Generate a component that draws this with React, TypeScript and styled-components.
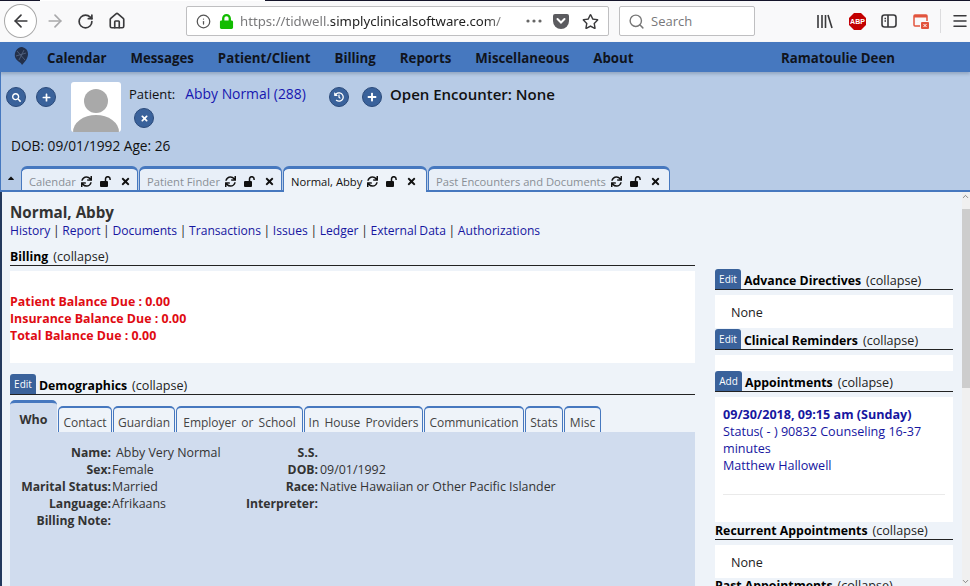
import React from 'react';
import styled, { createGlobalStyle } from 'styled-components';
import { FaSync, FaTimes, FaSearch, FaPlus, FaHistory, FaLock, FaRegStar, FaCaretUp } from 'react-icons/fa';
import { ArrowLeft, ArrowRight, RotateCw, Home, Info, Search, Menu, ChevronUp, ChevronDown } from 'lucide-react';

const GlobalStyle = createGlobalStyle`
  html, body { margin: 0; padding: 0; background: #eef3f9; overflow: hidden; }
  * { box-sizing: border-box; }
  body { font-family: 'Open Sans', 'Noto Sans', sans-serif; font-size: 12px; color: #222; }
`;

const Page = styled.div`
  width: 970px;
  height: 586px;
  overflow: hidden;
  display: flex;
  flex-direction: column;
`;

/* browser chrome */
const Toolbar = styled.div`
  height: 42px;
  flex: none;
  background-color: #f9f9fa;
  background-image: linear-gradient(to right, #14142a 40px, #fff 40px, #fff 265px, #14142a 265px);
  background-size: 100% 1px;
  background-repeat: no-repeat;
  display: flex;
  align-items: center;
  color: #3a3a3c;
`;
const BackButton = styled.div`
  width: 34px;
  height: 34px;
  margin-left: 4px;
  border: 1px solid #a8a8a8;
  border-radius: 50%;
  background: #fff;
  display: flex;
  align-items: center;
  justify-content: center;
`;
const ToolIcon = styled.div<{ $w: number; $faded?: boolean }>`
  width: ${p => p.$w}px;
  flex: none;
  display: flex;
  align-items: center;
  justify-content: center;
  color: ${p => (p.$faded ? '#a9a9ab' : '#3a3a3c')};
`;
const UrlBar = styled.div`
  width: 423px;
  height: 30px;
  margin-left: 49px;
  flex: none;
  background: #fff;
  border: 1px solid #bfbfc1;
  border-radius: 2px;
  display: flex;
  align-items: center;
  padding-left: 9px;
  font-size: 13.2px;
  font-family: 'Noto Sans', sans-serif;
  color: #1b1b1b;
`;
const UrlText = styled.div`
  width: 278px;
  margin-left: 6px;
  white-space: nowrap;
  color: #222;
  -webkit-mask-image: linear-gradient(to right, #000 88%, transparent);
  mask-image: linear-gradient(to right, #000 88%, transparent);
  span { color: #7a7a7c; }
`;
const SearchBox = styled.div`
  width: 136px;
  height: 30px;
  margin-left: 10px;
  flex: none;
  background: #fff;
  border: 1px solid #bfbfc1;
  border-radius: 2px;
  display: flex;
  align-items: center;
  padding-left: 8px;
  gap: 6px;
  font-size: 13px;
  color: #77777a;
`;

/* application nav */
const NavBar = styled.div`
  height: 30px;
  flex: none;
  padding-top: 2px;
  background: #4678bf;
  display: flex;
  align-items: center;
  font-size: 13.25px;
  font-weight: 700;
  color: #10141d;
  box-shadow: 0 2px 3px rgba(60, 80, 110, 0.3);
  position: relative;
`;
const Logo = styled.svg`
  margin: -5px 18px 0 13px;
  flex: none;
`;
const NavLinks = styled.div`
  display: flex;
  gap: 24px;
  width: 734px;
`;

/* patient header */
const PatientBar = styled.div`
  flex: none;
  height: 120px;
  background: #b7cbe6;
  border-left: 1px solid #4678bf;
  display: flex;
  flex-direction: column;
`;
const PatientTop = styled.div`
  display: flex;
  height: 55px;
  margin-top: 10px;
  padding-left: 5px;
`;
const RoundButton = styled.div<{ $size?: number }>`
  width: ${p => p.$size ?? 20}px;
  height: ${p => p.$size ?? 20}px;
  border-radius: 50%;
  background: #3a629b;
  border: 1px solid #2b4a7a;
  color: #fff;
  flex: none;
  display: flex;
  align-items: center;
  justify-content: center;
`;
const SearchGroup = styled.div`
  display: flex;
  gap: 10px;
  margin-top: 5px;
  width: 65px;
`;
const Avatar = styled.svg`
  width: 50px;
  height: 50px;
  flex: none;
  border-radius: 3px;
  background: #fff;
  overflow: hidden;
`;
const PatientInfo = styled.div`
  width: 200px;
  margin-left: 8px;
  display: flex;
  flex-direction: column;
`;
const PatientLine = styled.div`
  font-size: 13px;
  line-height: 18px;
  height: 26px;
  padding-top: 3px;
  color: #111;
  display: flex;
  gap: 10px;
  white-space: nowrap;
  a { color: #1616b0; font-size: 13.9px; }
`;
const ClearSlot = styled.div`
  margin-left: 5px;
`;
const EncounterGroup = styled.div`
  display: flex;
  gap: 13px;
  margin-top: 5px;
`;
const EncounterTitle = styled.div`
  font-size: 15px;
  font-weight: 600;
  color: #111;
  margin: -3px 0 0 -5px;
  line-height: 20px;
  white-space: nowrap;
`;
const DobLine = styled.div`
  font-size: 13.7px;
  line-height: 18px;
  height: 23px;
  margin-left: 10px;
  color: #111;
`;

const TabRow = styled.div`
  height: 26px;
  flex: none;
  display: flex;
  align-items: flex-end;
  border-bottom: 2px solid #4678bf;
  margin-top: auto;
`;
const Caret = styled.div`
  width: 20px;
  height: 24px;
  display: flex;
  align-items: center;
  justify-content: flex-start;
  color: #111;
  padding-left: 5px;
`;
const Tab = styled.div<{ $w: number; $active?: boolean; $gap?: number }>`
  width: ${p => p.$w}px;
  margin-left: ${p => p.$gap ?? 1}px;
  height: ${p => (p.$active ? 26 : 24)}px;
  margin-bottom: ${p => (p.$active ? -2 : 0)}px;
  background: ${p => (p.$active ? '#eef3f9' : '#e8eff8')};
  border-style: solid;
  border-color: #4678bf;
  border-width: 3px 1px 0;
  border-radius: 6px 6px 0 0;
  display: flex;
  align-items: center;
  padding: ${p => (p.$active ? 1 : 3)}px 0 0 7px;
  gap: 8px;
  font-size: 11.2px;
  white-space: nowrap;
  color: ${p => (p.$active ? '#111' : '#8a8f96')};
  svg { color: #111; flex: none; }
`;
const TabLabel = styled.span`
  margin-right: -3px;
`;

/* main content */
const Body = styled.div`
  flex: 1;
  min-height: 0;
  display: flex;
  background: #eef3f9;
  border-left: 2px solid #23395d;
  position: relative;
`;
const LeftColumn = styled.div`
  width: 685px;
  margin-left: 8px;
  flex: none;
  overflow: hidden;
`;
const RightColumn = styled.div`
  width: 238px;
  margin-left: 20px;
  padding-top: 77px;
  flex: none;
  overflow: hidden;
`;
const Scrollbar = styled.div`
  width: 8px;
  margin-left: 9px;
  flex: none;
  background: #f0f0f0;
  display: flex;
  flex-direction: column;
  color: #666;
`;
const ScrollThumb = styled.div`
  margin-top: 8px;
  height: 179px;
  background: #cdcdcd;
`;
const ScrollArrow = styled.div<{ $bottom?: boolean }>`
  height: 9px;
  margin-left: -1px;
  margin-top: ${p => (p.$bottom ? 'auto' : '0')};
  display: flex;
  align-items: center;
  justify-content: center;
`;
const PatientName = styled.h1`
  margin: 11px 0 0;
  font-size: 15.2px;
  line-height: 18px;
  font-weight: 700;
  color: #333;
`;
const LinkRow = styled.div`
  font-size: 12.1px;
  line-height: 18px;
  margin-top: 1px;
  word-spacing: -0.5px;
  color: #222;
  a { color: #1616a0; }
`;
const SectionHead = styled.div<{ $top?: number }>`
  display: flex;
  align-items: flex-end;
  gap: 3px;
  margin-top: ${p => p.$top ?? 0}px;
  border-bottom: 1px solid #222;
  font-size: 12.6px;
  line-height: 16px;
  color: #222;
  white-space: nowrap;
  b { color: #000; font-size: 12.3px; font-weight: 700; margin-right: 2px; }
`;
const EditButton = styled.div<{ $w?: number }>`
  width: ${p => p.$w ?? 26}px;
  height: 20px;
  background: #3a629b;
  border-radius: 3px 3px 0 0;
  color: #fff;
  font-size: 10px;
  display: flex;
  align-items: center;
  justify-content: center;
`;
const WhiteBox = styled.div<{ $h: number; $pad?: string }>`
  background: #fff;
  margin-top: 5px;
  height: ${p => p.$h}px;
  padding: ${p => p.$pad ?? '0'};
  overflow: hidden;
`;
const DueLine = styled.div`
  color: #e00b12;
  font-weight: 700;
  font-size: 12.4px;
  line-height: 17px;
`;
const DemoTabs = styled.div`
  display: flex;
  align-items: flex-end;
  margin-top: 5px;
  gap: 1px;
  height: 32px;
`;
const DemoTab = styled.div<{ $w: number; $active?: boolean }>`
  width: ${p => p.$w}px;
  height: ${p => (p.$active ? 32 : 26)}px;
  padding-top: ${p => (p.$active ? 4 : 5)}px;
  background: ${p => (p.$active ? '#d0dcee' : '#eef3f9')};
  border: 1px solid #4678bf;
  border-top-width: 2px;
  border-bottom: none;
  border-radius: 5px 5px 0 0;
  ${p => p.$active && 'border-width: 3px 0 0 0;'}
  font-size: ${p => (p.$active ? 12.5 : 12)}px;
  font-weight: ${p => (p.$active ? 700 : 400)};
  word-spacing: 2px;
  color: ${p => (p.$active ? '#333' : '#444')};
  display: flex;
  align-items: center;
  justify-content: center;
  white-space: nowrap;
`;
const DemoPanel = styled.div`
  background: #d0dcee;
  height: 200px;
  padding-top: 12px;
`;
const DemoGrid = styled.div`
  display: grid;
  grid-template-columns: 101px 135px 72px 1fr;
  grid-auto-rows: 17px;
  font-size: 12.4px;
  line-height: 17px;
  color: #333;
  white-space: nowrap;
`;
const DemoLabel = styled.div`
  font-weight: 700;
  font-size: 12.2px;
  text-align: right;
`;
const DemoValue = styled.div<{ $indent?: number }>`
  padding-left: ${p => p.$indent ?? 0}px;
`;
const NoneText = styled.div`
  font-size: 12.6px;
  line-height: 17px;
  color: #222;
`;
const AppointmentHead = styled.div`
  font-weight: 700;
  color: #1616a0;
  font-size: 12.6px;
  line-height: 17px;
`;
const AppointmentLine = styled.div`
  color: #1616a0;
  font-size: 12.6px;
  line-height: 17px;
`;
const AppointmentRule = styled.div`
  height: 1px;
  background: #eaeaea;
  margin-top: 20px;
`;

const UnlockIcon = () => (
  <svg width="12" height="11" viewBox="0 0 12 11">
    <rect x="0" y="5" width="8" height="6" rx="1" fill="currentColor" />
    <path d="M5.5 5V3a2.3 2.3 0 0 1 4.6 0v1" fill="none" stroke="currentColor" strokeWidth="1.5" />
  </svg>
);

const tabIcons = (
  <>
    <FaSync size={11} />
    <UnlockIcon />
    <FaTimes size={11} />
  </>
);

const links = ['History', 'Report', 'Documents', 'Transactions', 'Issues', 'Ledger', 'External Data', 'Authorizations'];

const demoRows: [string, string, string, string][] = [
  ['Name:', 'Abby Very Normal', 'S.S.', ''],
  ['Sex:', 'Female', 'DOB:', '09/01/1992'],
  ['Marital Status:', 'Married', 'Race:', 'Native Hawaiian or Other Pacific Islander'],
  ['Language:', 'Afrikaans', 'Interpreter:', ''],
  ['Billing Note:', '', '', ''],
];

const demoTabs: [string, number][] = [
  ['Contact', 54],
  ['Guardian', 62],
  ['Employer or School', 127],
  ['In House Providers', 119],
  ['Communication', 100],
  ['Stats', 38],
  ['Misc', 37],
];

const Head: React.FC<{ title: string; button?: string; top?: number }> = ({ title, button, top }) => (
  <SectionHead $top={top}>
    {button && <EditButton $w={button === 'Add' ? 27 : 26}>{button}</EditButton>}
    <b>{title}</b> (collapse)
  </SectionHead>
);

export default function App() {
  return (
    <Page>
      <GlobalStyle />
      <Toolbar>
        <BackButton>
          <ArrowLeft size={20} strokeWidth={2} />
        </BackButton>
        <ToolIcon $w={36} $faded>
          <ArrowRight size={20} strokeWidth={2} />
        </ToolIcon>
        <ToolIcon $w={24}>
          <RotateCw size={17} strokeWidth={2.4} />
        </ToolIcon>
        <ToolIcon $w={40}>
          <Home size={18} strokeWidth={2.2} />
        </ToolIcon>
        <UrlBar>
          <Info size={15} color="#555" />
          <FaLock size={15} color="#12bc00" style={{ marginLeft: 8 }} />
          <UrlText>
            <span>https://tidwell.</span>simplyclinicalsoftware.com/
          </UrlText>
          <ToolIcon $w={24} style={{ marginLeft: 4 }}>
            <svg width="16" height="4" viewBox="0 0 16 4"><circle cx="2" cy="2" r="1.6" fill="#666" /><circle cx="8" cy="2" r="1.6" fill="#666" /><circle cx="14" cy="2" r="1.6" fill="#666" /></svg>
          </ToolIcon>
          <ToolIcon $w={30}>
            <svg width="16" height="15" viewBox="0 0 16 15"><path d="M2 0h12a2 2 0 0 1 2 2v5a8 8 0 0 1-16 0V2a2 2 0 0 1 2-2z" fill="#5b5b5f" /><path d="M4.5 5l3.5 3.5L11.5 5" stroke="#fff" strokeWidth="2" fill="none" strokeLinecap="round" /></svg>
          </ToolIcon>
          <ToolIcon $w={28}>
            <FaRegStar size={17} />
          </ToolIcon>
        </UrlBar>
        <SearchBox>
          <Search size={17} color="#777" />
          Search
        </SearchBox>
        <ToolIcon $w={32} style={{ marginLeft: 54 }}>
          <svg width="16" height="15" viewBox="0 0 16 15" fill="none" stroke="#3a3a3c" strokeWidth="1.6"><path d="M1 1v13M5 1v13M8.5 1v13M11 1l4 13" /></svg>
        </ToolIcon>
        <ToolIcon $w={32}>
          <svg width="17" height="17" viewBox="0 0 17 17"><polygon points="5,0 12,0 17,5 17,12 12,17 5,17 0,12 0,5" fill="#c30000" /><text x="8.5" y="11" fontSize="7" fontWeight="700" fill="#fff" textAnchor="middle" fontFamily="Liberation Sans">ABP</text></svg>
        </ToolIcon>
        <ToolIcon $w={32}>
          <svg width="16" height="14" viewBox="0 0 16 14" fill="none" stroke="#3a3a3c" strokeWidth="1.6"><rect x="1" y="1" width="14" height="12" rx="2.5" /><path d="M7 1v12M3.5 4.5h1.5M3.5 7h1.5" /></svg>
        </ToolIcon>
        <ToolIcon $w={32}>
          <svg width="16" height="15" viewBox="0 0 16 15" fill="none"><path d="M7 12H2a1 1 0 0 1-1-1V2a1 1 0 0 1 1-1h11a1 1 0 0 1 1 1v5" stroke="#e2543d" strokeWidth="1.5" /><rect x="1" y="1" width="13" height="2.5" fill="#e2543d" /><rect x="8" y="8" width="8" height="7" rx="1" fill="#e2543d" /><path d="M10.5 10l3 3M13.5 10l-3 3" stroke="#fff" /></svg>
        </ToolIcon>
        <ToolIcon $w={30} style={{ borderLeft: '1px solid #dcdcde', height: 24, marginLeft: 3 }}>
          <Menu size={18} strokeWidth={2} style={{ marginLeft: 8 }} />
        </ToolIcon>
      </Toolbar>

      <NavBar>
        <Logo width="16" height="18" viewBox="0 0 16 18">
          <path d="M8 0c3 0 7 2 7 7 0 4-3 8-6 11-1-3-6-4-7-8C1 5 4 1 8 0z" fill="#23304a" />
          <path d="M4 4l8 9M11 3L6 13M3 9l10-3" stroke="#5d6f8c" strokeWidth="0.7" />
        </Logo>
        <NavLinks>
          <span>Calendar</span>
          <span>Messages</span>
          <span>Patient/Client</span>
          <span>Billing</span>
          <span>Reports</span>
          <span>Miscellaneous</span>
          <span>About</span>
        </NavLinks>
        <span>Ramatoulie Deen</span>
      </NavBar>

      <PatientBar>
        <PatientTop>
          <SearchGroup>
            <RoundButton><FaSearch size={9} /></RoundButton>
            <RoundButton><FaPlus size={9} /></RoundButton>
          </SearchGroup>
          <Avatar viewBox="0 0 50 50">
            <circle cx="25" cy="19" r="12" fill="#a9a9a9" />
            <ellipse cx="25" cy="50" rx="23" ry="17" fill="#a9a9a9" />
          </Avatar>
          <PatientInfo>
            <PatientLine>
              <span>Patient:</span>
              <a>Abby Normal (288)</a>
            </PatientLine>
            <ClearSlot>
              <RoundButton><FaTimes size={9} /></RoundButton>
            </ClearSlot>
          </PatientInfo>
          <EncounterGroup>
            <RoundButton><FaHistory size={10} /></RoundButton>
            <RoundButton><FaPlus size={10} /></RoundButton>
            <EncounterTitle>Open Encounter: None</EncounterTitle>
          </EncounterGroup>
        </PatientTop>
        <DobLine>DOB: 09/01/1992 Age: 26</DobLine>
        <TabRow>
          <Caret><FaCaretUp size={10} /></Caret>
          <Tab $w={117} $gap={0}><TabLabel>Calendar</TabLabel>{tabIcons}</Tab>
          <Tab $w={143}><TabLabel>Patient Finder</TabLabel>{tabIcons}</Tab>
          <Tab $w={144} $active><TabLabel>Normal, Abby</TabLabel>{tabIcons}</Tab>
          <Tab $w={242}><TabLabel>Past Encounters and Documents</TabLabel>{tabIcons}</Tab>
        </TabRow>
      </PatientBar>

      <Body>
        <LeftColumn>
          <PatientName>Normal, Abby</PatientName>
          <LinkRow>
            {links.map((l, i) => (
              <React.Fragment key={l}>
                {i > 0 && ' | '}
                <a>{l}</a>
              </React.Fragment>
            ))}
          </LinkRow>
          <Head title="Billing" top={9} />
          <WhiteBox $h={92} $pad="22px 0 0">
            <DueLine>Patient Balance Due : 0.00</DueLine>
            <DueLine>Insurance Balance Due : 0.00</DueLine>
            <DueLine>Total Balance Due : 0.00</DueLine>
          </WhiteBox>
          <Head title="Demographics" button="Edit" top={11} />
          <DemoTabs>
            <DemoTab $w={47} $active>Who</DemoTab>
            {demoTabs.map(([label, w]) => (
              <DemoTab key={label} $w={w}>{label}</DemoTab>
            ))}
          </DemoTabs>
          <DemoPanel>
            <DemoGrid>
              {demoRows.map(([a, b, c, d], i) => (
                <React.Fragment key={a}>
                  <DemoLabel>{a}</DemoLabel>
                  <DemoValue $indent={i === 0 ? 5 : 1}>{b}</DemoValue>
                  <DemoLabel>{c}</DemoLabel>
                  <DemoValue $indent={2}>{d}</DemoValue>
                </React.Fragment>
              ))}
            </DemoGrid>
          </DemoPanel>
        </LeftColumn>
        <RightColumn>
          <Head title="Advance Directives" button="Edit" />
          <WhiteBox $h={33} $pad="9px 16px 0">
            <NoneText>None</NoneText>
          </WhiteBox>
          <Head title="Clinical Reminders" button="Edit" top={1} />
          <WhiteBox $h={16} />
          <Head title="Appointments" button="Add" />
          <WhiteBox $h={125} $pad="9px 8px 0">
            <AppointmentHead>09/30/2018, 09:15 am (Sunday)</AppointmentHead>
            <AppointmentLine>Status( - ) 90832 Counseling 16-37 minutes</AppointmentLine>
            <AppointmentLine>Matthew Hallowell</AppointmentLine>
            <AppointmentRule />
          </WhiteBox>
          <Head title="Recurrent Appointments" top={1} />
          <WhiteBox $h={33} $pad="9px 16px 0">
            <NoneText>None</NoneText>
          </WhiteBox>
          <Head title="Past Appointments" />
        </RightColumn>
        <Scrollbar>
          <ScrollArrow><ChevronUp size={9} /></ScrollArrow>
          <ScrollThumb />
          <ScrollArrow $bottom><ChevronDown size={9} /></ScrollArrow>
        </Scrollbar>
      </Body>
    </Page>
  );
}
